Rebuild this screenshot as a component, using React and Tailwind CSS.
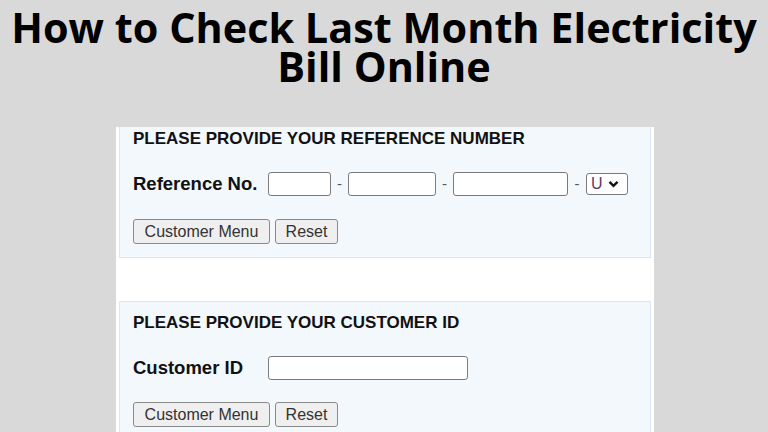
export default function App() {
  const arial = { fontFamily: '"Liberation Sans", Arial, sans-serif' };
  const Btn = ({ children, w }) => (
    <button className={`h-[25px] ${w} rounded-[3px] border border-[#8a8a8a] bg-[#efefef] text-[16px] text-[#333] leading-none`} style={arial}>
      {children}
    </button>
  );
  const Input = ({ w }) => (
    <div className={`h-[24px] ${w} rounded-[3px] border border-[#7a7a7a] bg-white`} />
  );
  const Dash = ({ w }) => <span className={`${w} text-center text-[15px] text-[#555]`}>-</span>;
  return (
    <div className="w-[768px] h-[432px] overflow-hidden bg-[#d9d9d9] flex flex-col items-center">
      <h1
        className="mt-[8px] flex flex-col items-center text-center text-[41.4px] font-bold text-black"
        style={{ fontFamily: '"Open Sans", sans-serif' }}
      >
        <span className="block h-[39px] leading-[39px]">How to Check Last Month Electricity</span>
        <span className="block h-[39px] leading-[39px]">Bill Online</span>
      </h1>
      <div className="mt-[41px] self-start ml-[116px] w-[538px] flex-1 bg-white px-[3px]" style={arial}>
        <div className="h-[131px] border border-[#dbe6f2] border-t-0 bg-[#f3f8fd] pl-[13px] pt-[3px]">
          <div className="text-[17px] font-bold text-[#111] leading-[18px]">PLEASE PROVIDE YOUR REFERENCE NUMBER</div>
          <div className="mt-[24px] flex items-center">
            <span className="w-[135px] text-[18.5px] font-bold text-[#111] leading-none">Reference No.</span>
            <Input w="w-[63px]" />
            <Dash w="w-[17px]" />
            <Input w="w-[88px]" />
            <Dash w="w-[17px]" />
            <Input w="w-[115px]" />
            <Dash w="w-[18px]" />
            <div className="h-[22px] w-[42px] rounded-[3px] border border-[#7a7a7a] bg-white flex items-center pl-[4px] gap-[5px]">
              <span className="text-[16px] text-[#5a3a6a] leading-none">U</span>
              <svg width="11" height="8" viewBox="0 0 11 8"><path d="M1.5 1.8 L5.5 5.8 L9.5 1.8" fill="none" stroke="#111" strokeWidth="2.4" /></svg>
            </div>
          </div>
          <div className="mt-[23px] flex gap-[5px]">
            <Btn w="w-[137px]">Customer Menu</Btn>
            <Btn w="w-[63px]">Reset</Btn>
          </div>
        </div>
        <div className="mt-[43px] h-[200px] border border-[#dbe6f2] bg-[#f3f8fd] pl-[13px] pt-[12px]">
          <div className="text-[17px] font-bold text-[#111] leading-[18px]">PLEASE PROVIDE YOUR CUSTOMER ID</div>
          <div className="mt-[24px] flex items-center">
            <span className="w-[135px] text-[18.5px] font-bold text-[#111] leading-none">Customer ID</span>
            <Input w="w-[200px]" />
          </div>
          <div className="mt-[22px] flex gap-[5px]">
            <Btn w="w-[137px]">Customer Menu</Btn>
            <Btn w="w-[63px]">Reset</Btn>
          </div>
        </div>
      </div>
    </div>
  );
}
